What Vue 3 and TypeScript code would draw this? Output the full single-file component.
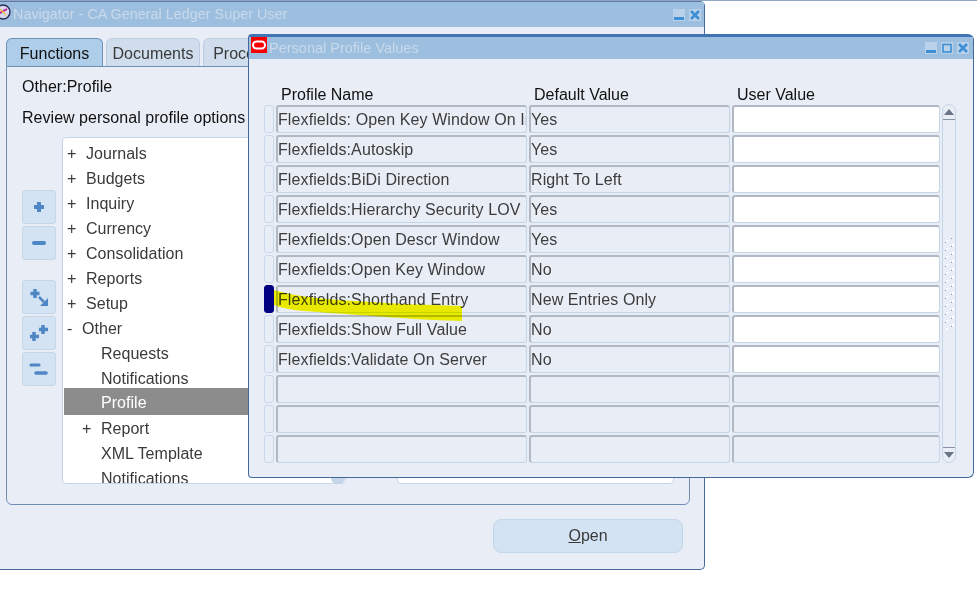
<script setup lang="ts">
const tree = [
  { mark: '+', label: 'Journals', kind: 'l1' },
  { mark: '+', label: 'Budgets', kind: 'l1' },
  { mark: '+', label: 'Inquiry', kind: 'l1' },
  { mark: '+', label: 'Currency', kind: 'l1' },
  { mark: '+', label: 'Consolidation', kind: 'l1' },
  { mark: '+', label: 'Reports', kind: 'l1' },
  { mark: '+', label: 'Setup', kind: 'l1' },
  { mark: '-', label: 'Other', kind: 'expanded' },
  { mark: '', label: 'Requests', kind: 'l2' },
  { mark: '', label: 'Notifications', kind: 'l2' },
  { mark: '', label: 'Profile', kind: 'l2 sel' },
  { mark: '+', label: 'Report', kind: 'l2 sub' },
  { mark: '', label: 'XML Template', kind: 'l2' },
  { mark: '', label: 'Notifications', kind: 'l2' },
]
const rows: { name: string; value: string; current?: boolean; empty?: boolean }[] = [
  { name: 'Flexfields: Open Key Window On Invalid Value', value: 'Yes' },
  { name: 'Flexfields:Autoskip', value: 'Yes' },
  { name: 'Flexfields:BiDi Direction', value: 'Right To Left' },
  { name: 'Flexfields:Hierarchy Security LOV', value: 'Yes' },
  { name: 'Flexfields:Open Descr Window', value: 'Yes' },
  { name: 'Flexfields:Open Key Window', value: 'No' },
  { name: 'Flexfields:Shorthand Entry', value: 'New Entries Only', current: true },
  { name: 'Flexfields:Show Full Value', value: 'No' },
  { name: 'Flexfields:Validate On Server', value: 'No' },
  { name: '', value: '', empty: true },
  { name: '', value: '', empty: true },
  { name: '', value: '', empty: true },
]
const dots = Array.from({ length: 12 }, (_, i) => i)
</script>

<template>
  <div class="desktop">
    <section class="win nav">
      <header class="title">
        <svg class="nav-icon" width="12" height="18" viewBox="0 0 12 18">
          <circle cx="3" cy="9" r="7" fill="#d8d8ee" stroke="#2a2a5a" stroke-width="1.4" />
          <path d="M-2 11 L7 6" stroke="#c8209a" stroke-width="2" />
          <path d="M0 6 L6 12" stroke="#e8c840" stroke-width="1.4" />
        </svg>
        <span class="title-text">Navigator - CA General Ledger Super User</span>
        <span class="ctrls">
          <span class="ctrl"><svg width="12" height="12" viewBox="0 0 12 12"><rect x="1" y="8" width="10" height="3" fill="#3d8fd6" /></svg></span>
          <span class="ctrl"><svg width="12" height="12" viewBox="0 0 12 12"><path d="M2 2 L10 10 M10 2 L2 10" stroke="#3d8fd6" stroke-width="2.6" /></svg></span>
        </span>
      </header>
      <div class="nav-body">
        <div class="tabs">
          <span class="tab active">Functions</span>
          <span class="tab">Documents</span>
          <span class="tab proc">Processes</span>
        </div>
        <div class="panel">
          <p class="crumb">Other:Profile</p>
          <p class="desc">Review personal profile options</p>
          <div class="panel-row">
            <div class="tools">
              <button class="tool"><svg width="16" height="16" viewBox="0 0 16 16"><path d="M8 3 V13 M3 8 H13" stroke="#4f86c6" stroke-width="4" /></svg></button>
              <button class="tool"><svg width="16" height="16" viewBox="0 0 16 16"><path d="M3 8 H13" stroke="#4f86c6" stroke-width="4" stroke-linecap="round" /></svg></button>
              <button class="tool gap"><svg width="20" height="20" viewBox="0 0 20 20"><path d="M6 2 V11 M1.500 6.500 H10.500" stroke="#4f86c6" stroke-width="3.500" /><path d="M10 10 L15 15" stroke="#4f86c6" stroke-width="2.500" /><path d="M19 11 V19 H11 Z" fill="#4f86c6" /></svg></button>
              <button class="tool"><svg width="20" height="20" viewBox="0 0 20 20"><path d="M5 9 V18 M1 13.500 H10" stroke="#4f86c6" stroke-width="3.500" /><path d="M14 2 V11 M10 6.500 H19" stroke="#4f86c6" stroke-width="3.500" /></svg></button>
              <button class="tool"><svg width="20" height="20" viewBox="0 0 20 20"><path d="M2 6 H10" stroke="#4f86c6" stroke-width="3.200" stroke-linecap="round" /><path d="M7 14 H17" stroke="#4f86c6" stroke-width="3.600" stroke-linecap="round" /></svg></button>
            </div>
            <div class="tree">
              <div v-for="item in tree" :key="item.label + item.kind" class="node" :class="item.kind">
                <span class="mark">{{ item.mark }}</span><span>{{ item.label }}</span>
              </div>
              <span class="tree-thumb"></span>
            </div>
            <div class="other-box"></div>
          </div>
        </div>
        <div class="actions">
          <button class="open-btn"><u>O</u>pen</button>
        </div>
      </div>
    </section>

    <section class="win profile">
      <header class="title">
        <span class="ora"><svg width="16" height="16" viewBox="0 0 16 16"><rect x="2" y="4.500" width="12" height="7" rx="3.500" fill="none" stroke="#fff" stroke-width="2" /></svg></span>
        <span class="title-text">Personal Profile Values</span>
        <span class="ctrls">
          <span class="ctrl"><svg width="12" height="12" viewBox="0 0 12 12"><rect x="1" y="8" width="10" height="3" fill="#3d8fd6" /></svg></span>
          <span class="ctrl"><svg width="12" height="12" viewBox="0 0 12 12"><rect x="2" y="2.500" width="8" height="7.500" fill="none" stroke="#3d8fd6" stroke-width="1.600" /></svg></span>
          <span class="ctrl"><svg width="12" height="12" viewBox="0 0 12 12"><path d="M2 2 L10 10 M10 2 L2 10" stroke="#3d8fd6" stroke-width="2.600" /></svg></span>
        </span>
      </header>
      <div class="prof-body">
        <div class="grid head">
          <span></span><span class="h1">Profile Name</span><span class="h2">Default Value</span><span class="h3">User Value</span>
        </div>
        <div class="table-wrap">
          <div class="rows">
            <div v-for="(row, i) in rows" :key="i" class="grid row">
              <span class="ind" :class="{ cur: row.current }"></span>
              <span class="cell">{{ row.name }}</span>
              <span class="cell">{{ row.value }}</span>
              <span class="cell input" :class="{ blank: row.empty }"></span>
            </div>
          </div>
          <div class="scroll">
            <span class="arrow up"><svg width="10" height="6" viewBox="0 0 10 6"><path d="M5 0 L10 6 H0 Z" fill="#6a7488" /></svg></span>
            <span class="thumb">
              <svg width="10" height="92" viewBox="0 0 10 92">
                <g v-for="d in dots" :key="d">
                  <rect x="2" :y="d * 8 + 2" width="2" height="2" fill="#fff" />
                  <rect x="1" :y="d * 8 + 4" width="1" height="1" fill="#7f95c0" />
                  <rect x="8" :y="d * 8 - 2" width="2" height="2" fill="#fff" />
                  <rect x="7" :y="d * 8" width="1" height="1" fill="#7f95c0" />
                </g>
              </svg>
            </span>
            <span class="arrow down"><svg width="10" height="6" viewBox="0 0 10 6"><path d="M0 0 H10 L5 6 Z" fill="#6a7488" /></svg></span>
          </div>
        </div>
      </div>
    </section>

    <svg class="marker" width="195" height="36" viewBox="0 0 195 36">
      <path d="M0 0 C20 6 40 8 65 10 L130 14 L188 16 L188 31 L160 30 C120 28 90 25 55 23 C30 21 12 20 0 15 Z" fill="#e9e900" />
    </svg>
  </div>
</template>

<style>
html, body { margin: 0; background: #fff; }
</style>

<style scoped>
.desktop {
  position: relative;
  width: 977px;
  height: 591px;
  overflow: hidden;
  background: #fff;
  border-top: 1px solid #8fa5c4;
  box-sizing: border-box;
  font-family: "Liberation Sans", Arial, sans-serif;
  font-size: 16px;
  color: #3a3a3a;
}
.win {
  position: absolute;
  box-sizing: border-box;
  display: flex;
  flex-direction: column;
  background: #e9eef6;
  border: 1px solid #47689a;
  border-radius: 0 5px 5px 0;
}
.nav { left: -3px; top: 0; width: 708px; height: 569px; border-top-color: #5d7aa5; }
.profile { left: 248px; top: 33px; width: 726px; height: 444px; border-top: 3px solid #3f75b5; border-radius: 4px 6px 6px 4px; }
.title {
  display: flex;
  align-items: center;
  flex: none;
  background: #9dbfdf;
  color: #c9d9ea;
  position: relative;
}
.nav .title { height: 25px; padding-left: 15px; }
.profile .title { height: 22px; padding-left: 20px; }
.title-text { font-size: 14.500px; line-height: 1; }
.nav .title-text { font-size: 14.400px; }
.nav-icon { position: absolute; left: 2px; top: 1px; }
.ora {
  position: absolute;
  left: 2px;
  top: 0;
  width: 16px;
  height: 16px;
  background: #f80000;
  display: flex;
}
.ctrls { margin-left: auto; display: flex; gap: 4px; }
.nav .ctrls { padding-right: 3px; }
.profile .ctrls { padding-right: 4px; padding-bottom: 0; }
.ctrl { width: 12px; height: 12px; background: #b9d2e9; display: flex; }
.nav-body { flex: 1; padding: 11px 14px 0 8px; display: flex; flex-direction: column; }
.tabs { display: flex; gap: 3px; height: 28px; }
.tab {
  box-sizing: border-box;
  height: 28px;
  width: 94px;
  text-align: center;
  line-height: 30px;
  background: #d0dded;
  border: 1px solid #bccde2;
  border-bottom: 0;
  border-radius: 6px 6px 0 0;
}
.tab.active { width: 97px; background: #aecde8; border-color: #6f8fb5; color: #111; }
.tab.proc { width: 95px; }
.panel {
  box-sizing: border-box;
  height: 439px;
  border: 1px solid #6f8fb5;
  border-radius: 0 0 6px 6px;
  padding: 11px 15px 0;
  color: #111;
  letter-spacing: 0.03px;
}
.crumb { margin: 0; line-height: 18px; }
.desc { margin: 13px 0 0; line-height: 18px; }
.panel-row { display: flex; margin-top: 10px; height: 347px; }
.tools { width: 40px; display: flex; flex-direction: column; gap: 2px; padding-top: 53px; box-sizing: border-box; flex: none; }
.tool {
  width: 34px;
  height: 34px;
  padding: 0;
  box-sizing: border-box;
  background: #d3e3f3;
  border: 1px solid #c5d6e9;
  border-radius: 3px;
  display: flex;
  align-items: center;
  justify-content: center;
}
.tool.gap { margin-top: 18px; }
.tree {
  width: 284px;
  flex: none;
  box-sizing: border-box;
  position: relative;
  background: #fff;
  border: 1px solid #c5d6e9;
  border-radius: 4px;
  padding-top: 3px;
  overflow: hidden;
  color: #3a3a3a;
}
.node { height: 25px; line-height: 25px; white-space: nowrap; display: flex; margin-left: 1px; }
.mark { flex: none; box-sizing: content-box; }
.node.l1 .mark { padding-left: 3px; width: 19px; }
.node.expanded .mark { padding-left: 3px; width: 15px; }
.node.l2 { padding-left: 37px; }
.node.sub { padding-left: 18px; }
.node.sub .mark { width: 19px; }
.node.sel { background: #8c8c8c; color: #fff; height: 27px; line-height: 30px; margin-top: -3px; margin-bottom: 1px; }
.tree-thumb { position: absolute; right: 0; bottom: -1px; width: 14px; height: 7px; background: #c5d6e9; border-radius: 0 0 6px 6px; }
.other-box { width: 278px; margin-left: 51px; background: #fff; border: 1px solid #c5d6e9; border-radius: 4px; box-sizing: border-box; }
.actions { display: flex; justify-content: flex-end; padding: 14px 7px 0 0; }
.open-btn {
  width: 190px;
  height: 34px;
  font: inherit;
  color: #3a3a3a;
  background: #d3e3f3;
  border: 1px solid #c5d6e9;
  border-radius: 8px;
  padding: 0;
}
.prof-body { padding: 26px 0 0 15px; }
.grid { display: grid; grid-template-columns: 10px 251px 201px 208px; column-gap: 2px; }
.head { height: 19px; line-height: 19px; color: #111; }
.h1 { padding-left: 5px; }
.h2 { padding-left: 5px; }
.h3 { padding-left: 5px; }
.table-wrap { display: flex; margin-top: 1px; }
.rows { display: flex; flex-direction: column; gap: 1px; width: 677px; flex: none; }
.row { height: 29px; }
.ind {
  box-sizing: border-box;
  height: 28px;
  border: 1px solid #c8d7e9;
  border-radius: 3px;
  background: #e9eef6;
}
.ind.cur { background: #000080; border-color: #000080; }
.cell {
  box-sizing: border-box;
  height: 28px;
  line-height: 26px;
  padding: 0;
  background: #e9eef6;
  border: 1px solid #c5d5e8;
  border-top: 2px solid #b0b8c4;
  border-left: 2px solid #b0b8c4;
  border-radius: 3px;
  white-space: nowrap;
  overflow: hidden;
  color: #3c3c3c;
  letter-spacing: 0.1px;
}
.input { background: #fff; }
.input.blank { background: #e9eef6; }
.scroll {
  box-sizing: border-box;
  width: 14px;
  height: 359px;
  margin-left: 1px;
  margin-top: -1px;
  border: 1px solid #c5d5e8;
  border-radius: 7px;
  display: flex;
  flex-direction: column;
}
.arrow { height: 14px; display: flex; align-items: center; justify-content: center; flex: none; }
.arrow.up { border-bottom: 1px solid #8a94a8; }
.arrow.down { border-top: 1px solid #8a94a8; }
.thumb { flex: 1; display: flex; align-items: center; justify-content: center; }
.marker { position: absolute; left: 274px; top: 289px; mix-blend-mode: darken; }
</style>
